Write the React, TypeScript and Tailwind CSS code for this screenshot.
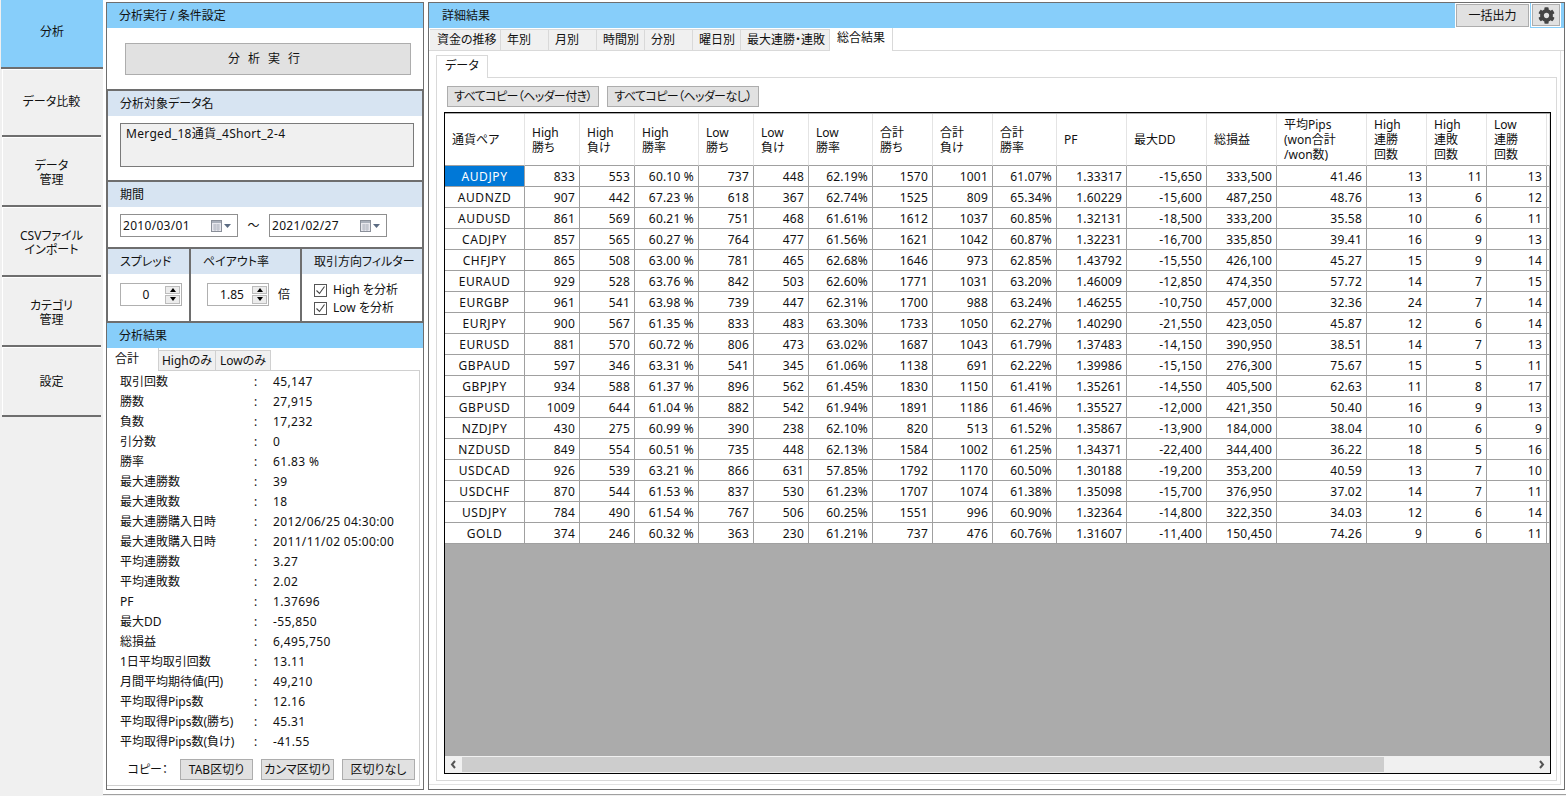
import { FaCog } from "react-icons/fa";

const font = { fontFamily: '"Noto Sans","Noto Sans CJK JP",sans-serif' };

const navItems = [["分析"], ["データ比較"], ["データ", "管理"], ["CSVファイル", "インポート"], ["カテゴリ", "管理"], ["設定"]];

const summary = [
  ["取引回数", "45,147"], ["勝数", "27,915"], ["負数", "17,232"], ["引分数", "0"], ["勝率", "61.83 %"],
  ["最大連勝数", "39"], ["最大連敗数", "18"], ["最大連勝購入日時", "2012/06/25 04:30:00"], ["最大連敗購入日時", "2011/11/02 05:00:00"],
  ["平均連勝数", "3.27"], ["平均連敗数", "2.02"], ["PF", "1.37696"], ["最大DD", "-55,850"], ["総損益", "6,495,750"],
  ["1日平均取引回数", "13.11"], ["月間平均期待値(円)", "49,210"], ["平均取得Pips数", "12.16"], ["平均取得Pips数(勝ち)", "45.31"], ["平均取得Pips数(負け)", "-41.55"],
];

const topTabs = [["資金の推移", "w-[71px] pl-[7px]"], ["年別", "w-[48px] pl-[6px]"], ["月別", "w-[48px] pl-[6px]"], ["時間別", "w-[48px] pl-[6px]"], ["分別", "w-[48px] pl-[6px]"], ["曜日別", "w-[48px] pl-[6px]"], ["最大連勝・連敗", "w-[89px] pl-[6px]"]];

const widths = [80, 55, 55, 64, 55, 55, 64, 60, 60, 64, 70, 80, 70, 90, 60, 60, 60, 3];

const headers = [["通貨ペア"], ["High", "勝ち"], ["High", "負け"], ["High", "勝率"], ["Low", "勝ち"], ["Low", "負け"], ["Low", "勝率"], ["合計", "勝ち"], ["合計", "負け"], ["合計", "勝率"], ["PF"], ["最大DD"], ["総損益"], ["平均Pips", "(won合計", "/won数)"], ["High", "連勝", "回数"], ["High", "連敗", "回数"], ["Low", "連勝", "回数"], []];

const rows = `AUDJPY 833 553 60.10_% 737 448 62.19% 1570 1001 61.07% 1.33317 -15,650 333,500 41.46 13 11 13
AUDNZD 907 442 67.23_% 618 367 62.74% 1525 809 65.34% 1.60229 -15,600 487,250 48.76 13 6 12
AUDUSD 861 569 60.21_% 751 468 61.61% 1612 1037 60.85% 1.32131 -18,500 333,200 35.58 10 6 11
CADJPY 857 565 60.27_% 764 477 61.56% 1621 1042 60.87% 1.32231 -16,700 335,850 39.41 16 9 13
CHFJPY 865 508 63.00_% 781 465 62.68% 1646 973 62.85% 1.43792 -15,550 426,100 45.27 15 9 14
EURAUD 929 528 63.76_% 842 503 62.60% 1771 1031 63.20% 1.46009 -12,850 474,350 57.72 14 7 15
EURGBP 961 541 63.98_% 739 447 62.31% 1700 988 63.24% 1.46255 -10,750 457,000 32.36 24 7 14
EURJPY 900 567 61.35_% 833 483 63.30% 1733 1050 62.27% 1.40290 -21,550 423,050 45.87 12 6 14
EURUSD 881 570 60.72_% 806 473 63.02% 1687 1043 61.79% 1.37483 -14,150 390,950 38.51 14 7 13
GBPAUD 597 346 63.31_% 541 345 61.06% 1138 691 62.22% 1.39986 -15,150 276,300 75.67 15 5 11
GBPJPY 934 588 61.37_% 896 562 61.45% 1830 1150 61.41% 1.35261 -14,550 405,500 62.63 11 8 17
GBPUSD 1009 644 61.04_% 882 542 61.94% 1891 1186 61.46% 1.35527 -12,000 421,350 50.40 16 9 13
NZDJPY 430 275 60.99_% 390 238 62.10% 820 513 61.52% 1.35867 -13,900 184,000 38.04 10 6 9
NZDUSD 849 554 60.51_% 735 448 62.13% 1584 1002 61.25% 1.34371 -22,400 344,400 36.22 18 5 16
USDCAD 926 539 63.21_% 866 631 57.85% 1792 1170 60.50% 1.30188 -19,200 353,200 40.59 13 7 10
USDCHF 870 544 61.53_% 837 530 61.23% 1707 1074 61.38% 1.35098 -15,700 376,950 37.02 14 7 11
USDJPY 784 490 61.54_% 767 506 60.25% 1551 996 60.90% 1.32364 -14,800 322,350 34.03 12 6 14
GOLD 374 246 60.32_% 363 230 61.21% 737 476 60.76% 1.31607 -11,400 150,450 74.26 9 6 11`
  .split("\n")
  .map((r) => r.split(" ").map((c) => c.replace("_", " ")));

function CalendarIcon() {
  return (
    <svg width="24" height="14" viewBox="0 0 24 14" className="shrink-0">
      <rect x="0.5" y="1.5" width="10" height="11" fill="#e8e8ee" stroke="#8a8f99" />
      <rect x="1" y="2" width="9" height="2" fill="#aab0bb" />
      <path d="M2 6h7M2 8h7M2 10h7M4 5v7M7 5v7" stroke="#b8bcc6" strokeWidth="1" />
      <path d="M13 5h7l-3.5 4z" fill="#5b6b82" />
    </svg>
  );
}

function DateBox({ value }: { value: string }) {
  return (
    <div className="flex h-[23px] w-[118px] items-center justify-between border border-[#8f8f8f] bg-white px-[2px] tracking-[0.3px]">
      <span>{value}</span>
      <CalendarIcon />
    </div>
  );
}

function Spinner() {
  return (
    <div className="mr-px flex h-[18px] w-[15px] flex-col gap-px">
      <div className="flex flex-1 items-center justify-center border border-[#bcbcbc] bg-[#ececec]">
        <div className="h-0 w-0 border-x-[3px] border-b-[4px] border-x-transparent border-b-black" />
      </div>
      <div className="flex flex-1 items-center justify-center border border-[#bcbcbc] bg-[#ececec]">
        <div className="h-0 w-0 border-x-[3px] border-t-[4px] border-x-transparent border-t-black" />
      </div>
    </div>
  );
}

function Check({ label }: { label: string }) {
  return (
    <div className="flex h-[18px] items-center gap-[6px]">
      <div className="flex h-[13px] w-[13px] items-center justify-center border border-[#555] bg-white">
        <svg width="11" height="11" viewBox="0 0 11 11"><path d="M1.5 5.5l3 3 5-7" fill="none" stroke="#444" strokeWidth="1.1" /></svg>
      </div>
      <span className="leading-none">{label}</span>
    </div>
  );
}

function SubHead({ children, className = "" }: { children: string; className?: string }) {
  return <div className={`flex h-[25px] shrink-0 items-center bg-[#d7e4f2] ${className}`}>{children}</div>;
}

function GrayButton({ children, className = "" }: { children: string; className?: string }) {
  return <div className={`flex items-center justify-center whitespace-nowrap border border-[#adadad] bg-[#e1e1e1] ${className}`}>{children}</div>;
}

function LeftPanel() {
  return (
    <section className="flex h-[788px] w-[318px] shrink-0 flex-col border border-[#6e6e6e]">
      <div className="flex h-[25px] shrink-0 items-center bg-[#87cefa] pl-[12px]">分析実行 / 条件設定</div>
      <div className="h-[61px] shrink-0 bg-white pl-[18px] pt-[15px]">
        <GrayButton className="h-[32px] w-[286px] tracking-[8px]">分析実行</GrayButton>
      </div>
      <div className="flex h-[91px] shrink-0 flex-col border-x border-t-2 border-[#6e6e6e] bg-white">
        <SubHead className="pl-[12px]">分析対象データ名</SubHead>
        <div className="ml-[12px] mt-[7px] h-[44px] w-[294px] border border-[#7a7a7a] bg-[#f0f0f0] pl-[5px] pt-[1px] tracking-[0.3px]">Merged_18通貨_4Short_2-4</div>
      </div>
      <div className="flex h-[67px] shrink-0 flex-col border-x border-t-2 border-[#6e6e6e] bg-white">
        <SubHead className="pl-[12px]">期間</SubHead>
        <div className="mt-[7px] flex items-center pl-[12px]">
          <DateBox value="2010/03/01" />
          <span className="w-[31px] text-center">～</span>
          <DateBox value="2021/02/27" />
        </div>
      </div>
      <div className="flex h-[74px] shrink-0 border-x border-t-2 border-[#6e6e6e] bg-white">
        <div className="w-[83px] shrink-0 border-r-2 border-[#6e6e6e]">
          <SubHead className="pl-[12px]">スプレッド</SubHead>
          <div className="ml-[12px] mt-[9px] flex h-[23px] w-[62px] items-center border border-[#b0b0b0]">
            <span className="flex-1 pl-[6px] text-center">0</span>
            <Spinner />
          </div>
        </div>
        <div className="w-[111px] shrink-0 border-r-2 border-[#6e6e6e]">
          <SubHead className="pl-[12px]">ペイアウト率</SubHead>
          <div className="mt-[9px] flex items-center pl-[16px]">
            <div className="flex h-[23px] w-[62px] items-center border border-[#b0b0b0]">
              <span className="flex-1 pl-[4px] text-center">1.85</span>
              <Spinner />
            </div>
            <span className="ml-[9px]">倍</span>
          </div>
        </div>
        <div className="flex-1">
          <SubHead className="pl-[12px]">取引方向フィルター</SubHead>
          <div className="ml-[12px] mt-[7px] flex flex-col">
            <Check label="High を分析" />
            <Check label="Low を分析" />
          </div>
        </div>
      </div>
      <div className="flex min-h-0 flex-1 flex-col border-t-2 border-[#6e6e6e] bg-white">
        <div className="flex h-[25px] shrink-0 items-center bg-[#87cefa] pl-[12px]">分析結果</div>
        <div className="flex h-[22px] shrink-0 items-end">
          <div className="z-10 -mb-px flex h-[23px] w-[52px] items-center border-r border-[#d0d0d0] bg-white pb-[2px] pl-[8px]">合計</div>
          <div className="flex h-[20px] w-[57px] items-center justify-center border-r border-t border-[#d0d0d0] bg-[#f0f0f0]">Highのみ</div>
          <div className="flex h-[20px] w-[55px] items-center justify-center border-r border-t border-[#d0d0d0] bg-[#f0f0f0]">Lowのみ</div>
        </div>
        <div className="mb-[3px] mr-[3px] flex min-h-0 flex-1 flex-col border-b border-r border-t border-[#d0d0d0] pb-[5px] pt-[1px]">
          <div className="flex-1">
            {summary.map(([label, value]) => (
              <div key={label} className="flex h-[20px] items-center pl-[13px]">
                <span className="w-[134px] shrink-0 whitespace-nowrap">{label}</span>
                <span className="w-[19px] shrink-0">:</span>
                <span className="whitespace-nowrap tracking-[0.35px]">{value}</span>
              </div>
            ))}
          </div>
          <div className="flex items-center justify-end gap-[8px] pr-[4px]">
            <span className="mr-[4px]">コピー：</span>
            <GrayButton className="h-[21px] w-[73px]">TAB区切り</GrayButton>
            <GrayButton className="h-[21px] w-[73px]">カンマ区切り</GrayButton>
            <GrayButton className="h-[21px] w-[73px]">区切りなし</GrayButton>
          </div>
        </div>
      </div>
    </section>
  );
}

function ResultTable() {
  return (
    <div className="ml-[7px] mt-[5px] flex h-[662px] w-[1107px] flex-col border border-black bg-[#ababab] pt-px">
      <div className="min-h-0 flex-1 overflow-hidden">
        <table className="table-fixed border-separate border-spacing-0" style={{ width: widths.reduce((a, b) => a + b, 0) }}>
          <colgroup>
            {widths.map((w, i) => <col key={i} style={{ width: w }} />)}
          </colgroup>
          <thead>
            <tr className="h-[52px] bg-white">
              {headers.map((lines, i) => (
                <th key={i} className="border-b border-r border-b-[#a0a0a0] border-r-[#e4e4e4] pl-[7px] text-left font-normal leading-[15px]">
                  {lines.map((l) => <div key={l} className="whitespace-nowrap">{l}</div>)}
                </th>
              ))}
            </tr>
          </thead>
          <tbody>
            {rows.map((r, ri) => (
              <tr key={r[0]} className="h-[21px] bg-white">
                {[...r, ""].map((c, i) => (
                  <td key={i} className={`overflow-hidden whitespace-nowrap border-b border-r border-[#a0a0a0] p-0 pt-[2px] leading-none ${i === 0 ? "text-center tracking-[0.6px]" : "pr-[4px] text-right tracking-[0.2px]"} ${i === 0 && ri === 0 ? "bg-[#0078d7] text-white" : ""}`}>
                    {c}
                  </td>
                ))}
              </tr>
            ))}
          </tbody>
        </table>
      </div>
      <div className="flex h-[17px] shrink-0 items-center bg-[#f0f0f0]">
        <div className="flex w-[17px] shrink-0 justify-center">
          <svg width="7" height="9" viewBox="0 0 7 9"><path d="M5 1L2 4.5 5 8" fill="none" stroke="#555" strokeWidth="2" /></svg>
        </div>
        <div className="h-[15px] w-[922px] bg-[#cdcdcd]" />
        <div className="flex-1" />
        <div className="flex w-[17px] shrink-0 justify-center">
          <svg width="7" height="9" viewBox="0 0 7 9"><path d="M2 1l3 3.5L2 8" fill="none" stroke="#555" strokeWidth="2" /></svg>
        </div>
      </div>
    </div>
  );
}

function RightPanel() {
  return (
    <section className="flex h-[788px] w-[1137px] shrink-0 flex-col border border-[#6e6e6e] bg-white">
      <div className="flex h-[25px] shrink-0 items-start bg-[#87cefa] pl-[13px]">
        <span className="flex h-full flex-1 items-center">詳細結果</span>
        <div className="h-full w-[75px] bg-white pl-px pt-px">
          <GrayButton className="h-[23px] w-[73px]">一括出力</GrayButton>
        </div>
        <div className="ml-px mr-[3px] flex h-[24px] w-[30px] bg-white p-px">
          <div className="flex flex-1 items-center justify-center border border-[#adadad] bg-[#e1e1e1]">
            <FaCog className="text-[17px] text-[#444]" />
          </div>
        </div>
      </div>
      <div className="flex h-[23px] shrink-0 items-end border-b border-[#d9d9d9] pl-px">
        {topTabs.map(([t, w]) => (
          <div key={t} className={`flex h-[21px] items-center whitespace-nowrap border-r border-t border-[#d9d9d9] bg-[#f0f0f0] pb-px ${w}`}>{t}</div>
        ))}
        <div className="z-10 -mb-px flex h-[23px] w-[63px] items-center justify-center border-r border-[#d9d9d9] bg-white pb-[4px]">総合結果</div>
      </div>
      <div className="mb-[4px] mr-[3px] flex min-h-0 flex-1 flex-col border-b border-r border-[#e3e3e3] pb-[3px] pl-[7px] pr-[3px] pt-[4px]">
        <div className="flex h-[23px] shrink-0 items-end border-b border-[#d9d9d9]">
          <div className="z-10 -mb-px flex h-[23px] w-[52px] items-center justify-center border-x border-t border-[#d9d9d9] bg-white pb-[3px]">データ</div>
        </div>
        <div className="flex min-h-0 flex-1 flex-col border-x border-b border-[#d9d9d9]">
          <div className="flex h-[29px] shrink-0 items-end gap-[8px] pl-[10px]">
            <GrayButton className="h-[21px] w-[152px] tracking-[-0.6px]">すべてコピー（ヘッダー付き）</GrayButton>
            <GrayButton className="h-[21px] w-[152px] tracking-[-0.6px]">すべてコピー（ヘッダーなし）</GrayButton>
          </div>
          <ResultTable />
        </div>
      </div>
    </section>
  );
}

export default function App() {
  return (
    <main className="flex h-[796px] w-[1566px] overflow-hidden bg-[#f0f0f0] text-[12px] text-[#111] [font-feature-settings:'palt']" style={font}>
      <nav className="flex w-[103px] shrink-0 flex-col">
        {navItems.map((lines, i) => (
          <div key={i} className={`flex shrink-0 flex-col items-center justify-center border-b-2 border-[#6e6e6e] leading-[14px] ${i === 0 ? "ml-px h-[69px] bg-[#87cefa] pb-[3px]" : i === 1 ? "ml-[2px] mr-[2px] h-[68px] bg-[#f0f0f0] pb-px shadow-[inset_1px_1px_0_#fff]" : i === 5 ? "ml-[2px] mr-[2px] h-[70px] bg-[#f0f0f0] pt-[2px] shadow-[inset_1px_1px_0_#fff]" : "ml-[2px] mr-[2px] h-[70px] bg-[#f0f0f0] pt-[4px] shadow-[inset_1px_1px_0_#fff]"}`}>
            {lines.map((l) => <span key={l}>{l}</span>)}
          </div>
        ))}
      </nav>
      <div className="flex h-[795px] min-w-0 flex-1 gap-[4px] border-b border-[#a0a0a0] bg-white pl-[3px] pt-[2px]">
        <LeftPanel />
        <RightPanel />
      </div>
    </main>
  );
}
